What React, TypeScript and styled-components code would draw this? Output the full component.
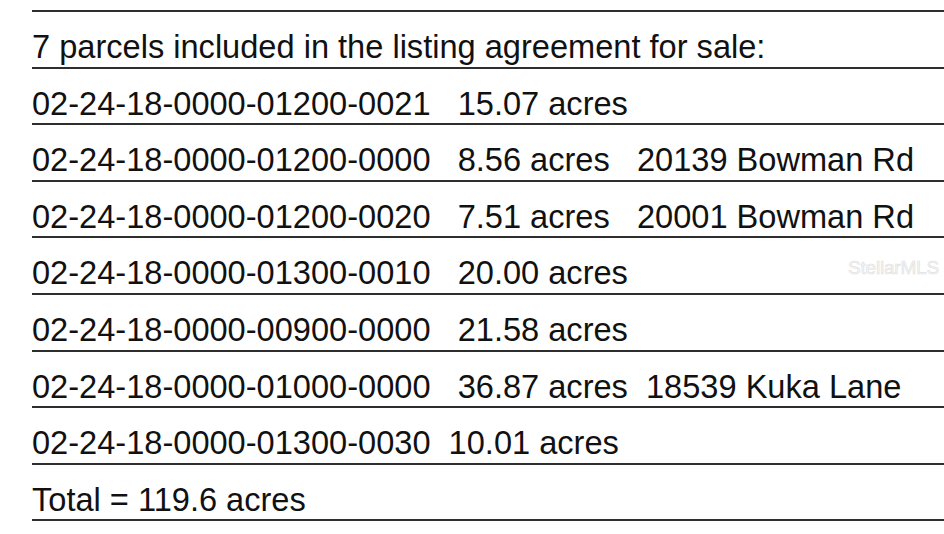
import React from "react";
import styled, { createGlobalStyle } from "styled-components";

const Global = createGlobalStyle`
  html, body { margin: 0; padding: 0; background: #fff; overflow: hidden; }
  body { width: 944px; height: 534px; }
`;

const Page = styled.div`
  position: relative;
  width: 944px;
  height: 534px;
  background: #fff;
  padding: 10px 0 0 32px;
  box-sizing: border-box;
`;

const Sheet = styled.div`
  border-top: 2px solid #2e2e2e;
  display: flex;
  flex-direction: column;
`;

const Row = styled.div`
  height: 56.6px;
  box-sizing: border-box;
  border-bottom: 2px solid #2e2e2e;
  display: flex;
  align-items: flex-end;
  padding-bottom: 3px;
  font-family: "Liberation Sans", Arial, sans-serif;
  font-size: 32.6px;
  line-height: 1;
  color: #111;
  white-space: pre;
`;

const Watermark = styled.div`
  position: absolute;
  left: 848px;
  top: 257px;
  font-family: "Liberation Sans", Arial, sans-serif;
  font-size: 19px;
  color: #f6f6f6;
  -webkit-text-stroke: 0.6px #e0e0e0;
  letter-spacing: -0.2px;
`;

const rows = [
  "7 parcels included in the listing agreement for sale:",
  "02-24-18-0000-01200-0021   15.07 acres",
  "02-24-18-0000-01200-0000   8.56 acres   20139 Bowman Rd",
  "02-24-18-0000-01200-0020   7.51 acres   20001 Bowman Rd",
  "02-24-18-0000-01300-0010   20.00 acres",
  "02-24-18-0000-00900-0000   21.58 acres",
  "02-24-18-0000-01000-0000   36.87 acres  18539 Kuka Lane",
  "02-24-18-0000-01300-0030  10.01 acres",
  "Total = 119.6 acres",
];

export default function App() {
  return (
    <>
      <Global />
      <Page>
        <Sheet>
          {rows.map((r, i) => (
            <Row key={i}>{r}</Row>
          ))}
        </Sheet>
        <Watermark>StellarMLS</Watermark>
      </Page>
    </>
  );
}
